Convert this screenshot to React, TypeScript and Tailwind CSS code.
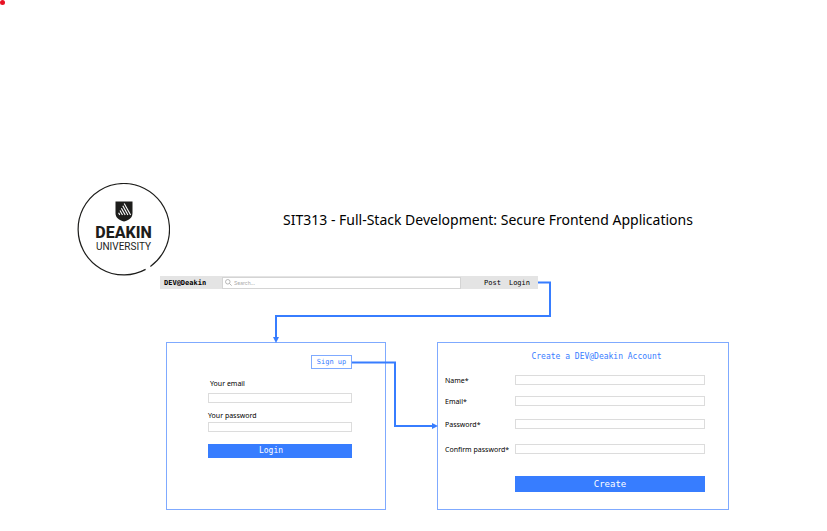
import type { ReactNode } from 'react';

const mono = "font-['DejaVu_Sans_Mono','Liberation_Mono',monospace]";
const sans = "font-['Noto_Sans','Open_Sans',sans-serif]";

function Logo() {
  return (
    <div className="relative flex h-[93px] w-[93px] shrink-0 flex-col items-center pt-[18px] text-[#1d1d1b]">
      <svg className="absolute inset-0 h-full w-full" viewBox="0 0 93 93" fill="none" aria-hidden="true">
        <path d="M68.6 86.4A45.7 45.7 0 1 1 73.4 83.4" stroke="#1d1d1b" strokeWidth="1.2" />
      </svg>
      <svg className="h-[21px] w-[18px]" viewBox="0 0 18 21" aria-hidden="true">
        <path d="M0.5 0.5H17.5V12C17.5 17 14 19 9 20.6C4 19 0.5 17 0.5 12Z" fill="#1d1d1b" />
        <g stroke="#fff" strokeWidth="1.1" fill="none">
          <path d="M9.2 2.5L15.6 14" />
          <path d="M7.8 4.8L12.9 14" />
          <path d="M6.4 7.3L10.2 14" />
          <path d="M5 9.6L7.5 14" />
          <path d="M3.6 11.8L4.8 14" />
        </g>
      </svg>
      <div className="mt-[3px] font-[Roboto,sans-serif] text-[16px] leading-[16px] font-extrabold">DEAKIN</div>
      <div className="font-[Roboto,sans-serif] text-[10px] leading-[12px]">UNIVERSITY</div>
    </div>
  );
}

function NavBar() {
  return (
    <nav className={`flex h-[13px] w-[378px] items-center bg-[#e4e4e4] pr-2 pl-1 text-[7px] leading-[12px] text-black ${mono}`}>
      <span className="w-[58px] font-bold">DEV@Deakin</span>
      <label className="flex h-[12px] w-[239px] items-center gap-[2px] border border-[#d4d4d4] bg-white px-[2px]">
        <svg className="h-[7px] w-[7px]" viewBox="0 0 8 8" fill="none" stroke="#a3a3a3" strokeWidth="0.9" aria-hidden="true">
          <circle cx="3.2" cy="3.2" r="2.6" />
          <path d="M5.2 5.2L7.6 7.6" />
        </svg>
        <input
          type="search"
          aria-label="Search"
          placeholder="Search..."
          className="min-w-0 flex-1 font-[Inter,sans-serif] text-[5px] leading-[8px] outline-none placeholder:text-[#a8a8a8]"
        />
      </label>
      <div className="ml-auto flex gap-2">
        <a href="#post">Post</a>
        <a href="#login">Login</a>
      </div>
    </nav>
  );
}

function Panel({ className, children }: { className: string; children: ReactNode }) {
  return <section className={`h-[168px] border border-[#7faaff] ${className}`}>{children}</section>;
}

const fieldBox = 'block h-[10px] w-full border border-[#dcdcdc] bg-white px-1 text-[7px] outline-none';

function LoginPanel() {
  return (
    <Panel className="w-[220px] pt-3 pr-[33px] pl-[41px]">
      <form className={`flex flex-col text-[7px] leading-[10px] text-black ${sans}`}>
        <button type="button" className={`h-[14px] w-[41px] self-end border border-[#7faaff] text-[7px] leading-[12px] text-[#377dff] ${mono}`}>
          Sign up
        </button>
        <label htmlFor="email" className="mt-[10px] pl-[2px]">Your email</label>
        <input id="email" type="email" className={`mt-1 ${fieldBox}`} />
        <label htmlFor="password" className="mt-2">Your password</label>
        <input id="password" type="password" className={`mt-px ${fieldBox}`} />
        <button type="button" className={`mt-3 h-[14px] bg-[#377dff] pr-[18px] text-[8px] leading-[14px] text-white ${mono}`}>
          Login
        </button>
      </form>
    </Panel>
  );
}

function Field({ id, label, type, gap }: { id: string; label: string; type: string; gap: string }) {
  return (
    <div className={`flex items-start ${gap}`}>
      <label htmlFor={id} className="w-[70px] shrink-0 pt-px whitespace-nowrap">{label}</label>
      <input id={id} type={type} className={fieldBox} />
    </div>
  );
}

function AccountPanel() {
  return (
    <Panel className="w-[292px] pt-2 pr-[23px] pl-[7px]">
      <form className={`flex flex-col text-[7px] leading-[10px] text-black ${sans}`}>
        <h2 className={`pl-[43px] text-center text-[8px] leading-[12px] text-[#377dff] ${mono}`}>Create a DEV@Deakin Account</h2>
        <Field id="name" label="Name*" type="text" gap="mt-3" />
        <Field id="new-email" label="Email*" type="email" gap="mt-[10px]" />
        <Field id="new-password" label="Password*" type="password" gap="mt-3" />
        <Field id="confirm" label="Confirm password*" type="password" gap="mt-[14px]" />
        <button type="button" className={`mt-[21px] ml-[70px] h-[16px] bg-[#377dff] text-[9px] leading-[16px] text-white ${mono}`}>
          Create
        </button>
      </form>
    </Panel>
  );
}

function Connectors() {
  return (
    <svg className="pointer-events-none absolute top-0 left-0" width="569" height="235" fill="none" aria-hidden="true">
      <path d="M378 6.5H390V40H116V63" stroke="#377dff" strokeWidth="2" />
      <path d="M113 61H119L116 67Z" fill="#377dff" />
      <path d="M192 86.5H235V150H272" stroke="#377dff" strokeWidth="2" />
      <path d="M272 147V153L278 150Z" fill="#377dff" />
    </svg>
  );
}

export default function App() {
  return (
    <main className="relative min-h-screen bg-white pt-[183px] pb-5">
      <span className="absolute top-0 left-0 h-[5px] w-[5px] rounded-full bg-[#e81123]" />
      <header className="flex h-[93px] items-start pl-[77px]">
        <Logo />
        <h1 className={`mt-[27px] ml-[113px] text-[14px] leading-[20px] whitespace-nowrap text-black ${sans}`}>
          SIT313 - Full-Stack Development: Secure Frontend Applications
        </h1>
      </header>
      <div className="relative ml-[160px] max-w-[569px]">
        <NavBar />
        <div className="mt-[53px] flex justify-between pl-[6px]">
          <LoginPanel />
          <AccountPanel />
        </div>
        <Connectors />
      </div>
    </main>
  );
}
